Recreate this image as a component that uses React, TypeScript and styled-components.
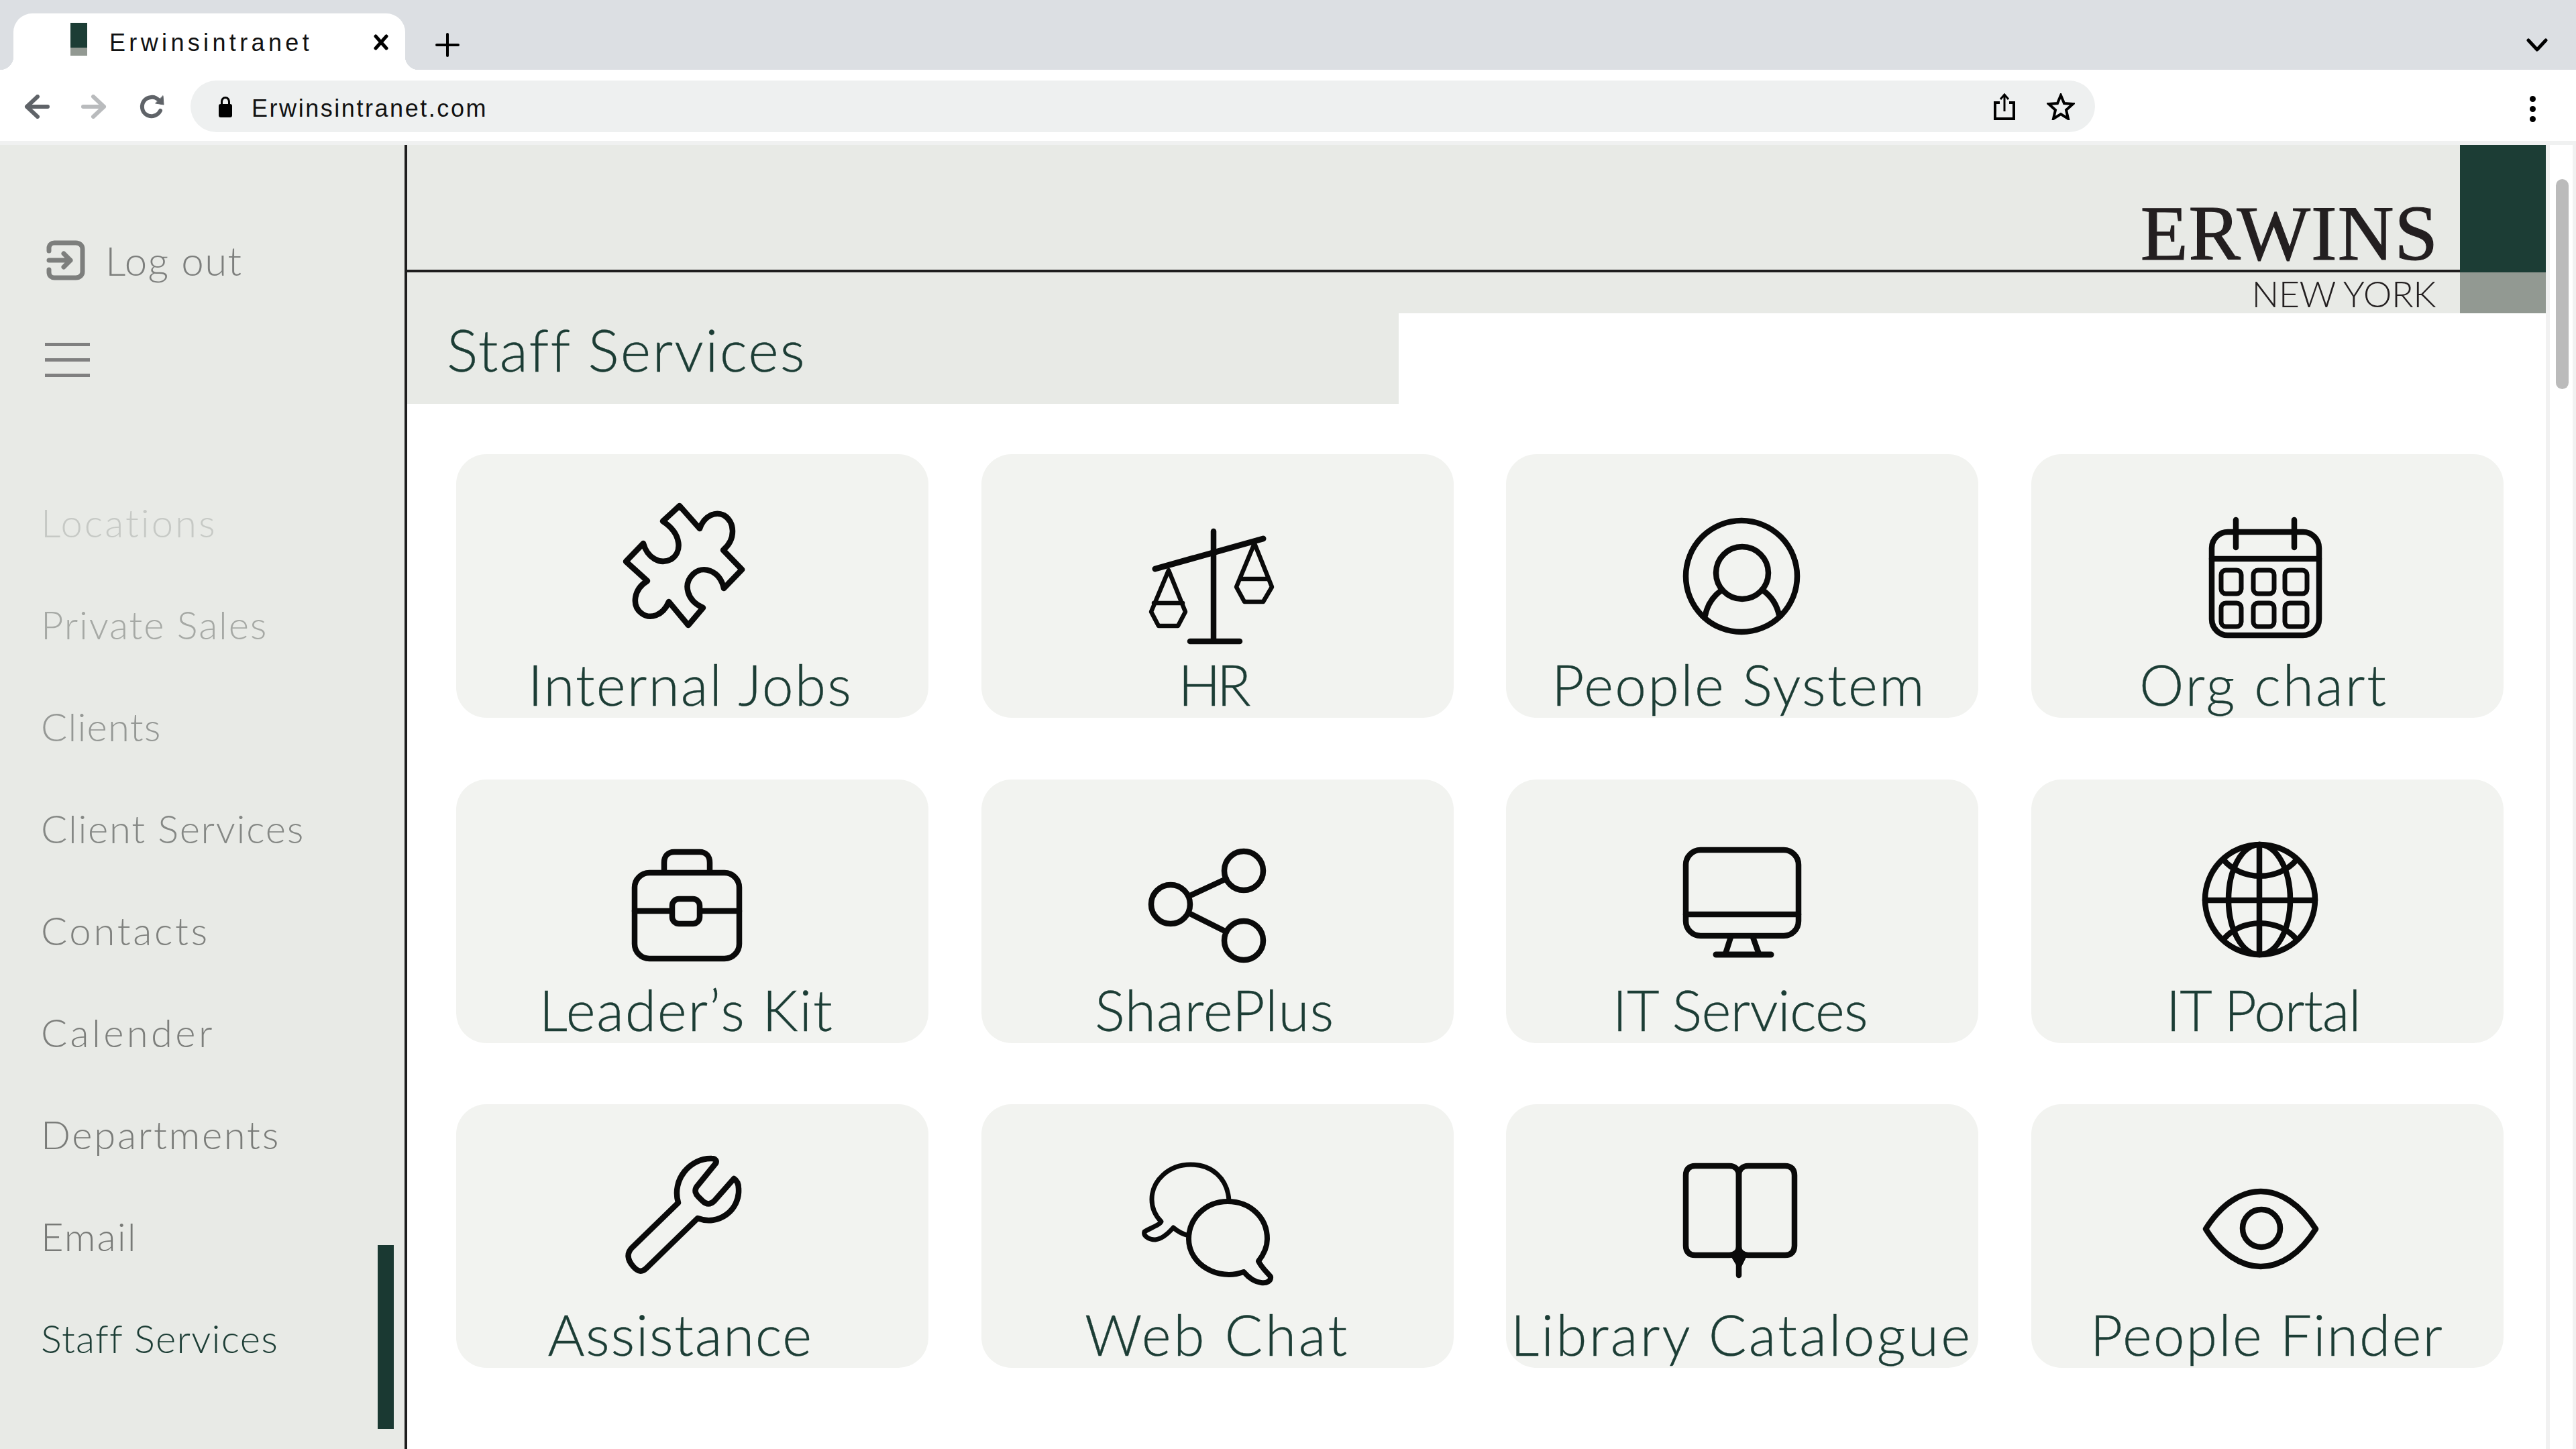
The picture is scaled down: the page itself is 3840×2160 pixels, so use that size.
import React from "react";
import styled, { createGlobalStyle } from "styled-components";

const GREEN = "#1c3d35";
const SOFT = "#e8eae6";
const UI = `"Liberation Sans", Arial, sans-serif`;
const GEO = `Lato, "Noto Sans", sans-serif`;

const Global = createGlobalStyle`
  html, body { margin: 0; padding: 0; background: #fff; }
  * { box-sizing: border-box; }
`;

const Screen = styled.div`
  width: 3840px; height: 2160px; display: flex; flex-direction: column; overflow: hidden; background: #fff;
`;
const TabStrip = styled.div`
  height: 104px; flex: none; background: #dcdfe3; display: flex; align-items: flex-start; padding: 20px 0 0 20px;
`;
const Tab = styled.div`
  position: relative; width: 584px; height: 84px; background: #fff; border-radius: 28px 28px 0 0;
  display: flex; align-items: center; padding: 0 0 0 85px; color: #111;
  &::before, &::after { content: ""; position: absolute; bottom: 0; width: 20px; height: 20px; }
  &::before { left: -20px; background: radial-gradient(circle at 0 0, transparent 20px, #fff 20.5px); }
  &::after { right: -20px; background: radial-gradient(circle at 100% 0, transparent 20px, #fff 20.5px); }
`;
const Favicon = styled.div`
  width: 25px; height: 49px; flex: none; margin: -8px 33px 0 0; background: linear-gradient(${GREEN} 37px, #929992 37px);
`;
const TabTitle = styled.span`
  font: 36px/1 ${UI}; letter-spacing: 5.35px; flex: 1; padding-top: 4px;
`;
const StripIcon = styled.svg`
  flex: none; fill: none; stroke: #000; stroke-linecap: round; stroke-linejoin: round;
`;
const CloseIcon = styled(StripIcon)`
  width: 24px; height: 24px; stroke-width: 5; margin: 2px 24px 0 0;
`;
const PlusIcon = styled(StripIcon)`
  width: 36px; height: 36px; stroke-width: 4; margin: 29px 0 0 45px;
`;
const ChevronIcon = styled(StripIcon)`
  width: 32px; height: 20px; stroke-width: 5; margin: 37px 42px 0 auto;
`;
const Toolbar = styled.div`
  height: 112px; flex: none; background: #fff; border-bottom: 6px solid #f0f1f1; display: flex; align-items: flex-start; padding: 16px 0 0 36px;
`;
const NavIcon = styled.svg<{ $tone: string }>`
  width: 38px; height: 36px; flex: none; margin: 21px 47px 0 0; fill: none; stroke: ${p => p.$tone}; stroke-width: 6; stroke-linecap: round; stroke-linejoin: round;
`;
const ReloadIcon = styled(NavIcon)`
  margin-left: 2px; margin-right: 38px;
`;
const Omnibox = styled.div`
  width: 2839px; height: 77px; flex: none; background: #eef0f0; border-radius: 39px; display: flex; align-items: center; padding: 0 30px 0 41px;
`;
const Lock = styled.svg`
  width: 22px; height: 32px; flex: none; margin-right: 28px; fill: #000;
`;
const Url = styled.span`
  font: 36px/1 ${UI}; letter-spacing: 2.55px; color: #111; flex: 1; padding-top: 7px;
`;
const OmniIcon = styled.svg`
  height: 40px; flex: none; fill: none; stroke: #000; stroke-width: 4;
`;
const ShareIcon = styled(OmniIcon)`
  width: 32px; margin-right: 47px;
`;
const StarIcon = styled(OmniIcon)`
  width: 42px;
`;
const Kebab = styled.div`
  margin: 23px 0 0 auto; width: 10px; margin-right: 59px; display: flex; flex-direction: column; gap: 6px;
  span { width: 9px; height: 9px; border-radius: 50%; background: #000; display: block; }
`;

const Body = styled.div`
  flex: 1; min-height: 0; display: flex;
`;
const Sidebar = styled.aside`
  width: 607px; flex: none; background: ${SOFT}; border-right: 4px solid #1e1e1e; display: flex;
`;
const SideColumn = styled.div`
  flex: 1; min-width: 0; display: flex; flex-direction: column; padding: 142px 0 0 61px;
`;
const LogoutRow = styled.div`
  display: flex; align-items: center; height: 60px; color: #7d7f7d; font: 300 60px/60px ${GEO}; letter-spacing: 1.4px;
`;
const LogoutIcon = styled.svg`
  width: 62px; height: 60px; flex: none; margin: 0 28px 0 6px; fill: none; stroke: #7d7f7d; stroke-width: 7; stroke-linecap: round; stroke-linejoin: round;
`;
const Burger = styled.div`
  width: 67px; margin: 93px 0 0 6px; display: flex; flex-direction: column; gap: 18px;
  span { height: 5px; background: #808080; display: block; }
`;
const NavList = styled.nav`
  margin-top: 141px; display: flex; flex-direction: column;
`;
const NavItem = styled.div<{ $tone: string; $track: number }>`
  height: 152px; display: flex; align-items: center; color: ${p => p.$tone}; font: 300 58px/1 ${GEO}; letter-spacing: ${p => p.$track}px; white-space: nowrap;
`;
const Thumb = styled.div`
  width: 24px; height: 274px; flex: none; align-self: flex-end; margin: 0 16px 30px 0; background: #1a3932;
`;

const Main = styled.main`
  flex: 1; min-width: 0; display: flex; flex-direction: column;
`;
const Header = styled.header`
  height: 251px; flex: none; display: flex; background: ${SOFT};
`;
const BrandColumn = styled.div`
  flex: 1; min-width: 0; display: flex; flex-direction: column; text-align: right;
`;
const BrandTop = styled.div`
  height: 190px; flex: none; border-bottom: 4px solid #1e1e1e; padding: 76px 32px 0 0;
`;
const BrandName = styled.div`
  font: 400 116px/112px "Liberation Serif", serif; color: #231f20; letter-spacing: 1px; -webkit-text-stroke: 1.2px #231f20;
`;
const BrandCity = styled.div`
  padding: 3px 36px 0 0; font: 300 54px/58px ${GEO}; color: #231f20; letter-spacing: -0.5px;
`;
const BrandStripe = styled.div`
  width: 128px; flex: none; display: flex; flex-direction: column; background: #929992;
  &::before { content: ""; height: 190px; background: ${GREEN}; }
`;
const TitleBand = styled.div`
  width: 1478px; height: 135px; flex: none; background: ${SOFT}; display: flex; align-items: flex-start; padding: 4px 0 0 59px;
`;
const Title = styled.h1`
  margin: 0; font: 300 87px/100px ${GEO}; color: ${GREEN}; letter-spacing: 2.2px; -webkit-text-stroke: 0.4px ${GREEN};
`;
const Grid = styled.div`
  margin-top: 75px; padding-left: 73px; display: grid; grid-template-columns: repeat(4, 704px); grid-auto-rows: 393px; column-gap: 78.5px; row-gap: 91.5px;
`;
const Card = styled.a`
  display: flex; flex-direction: column; background: #f2f3f0; border-radius: 45px;
`;
const IconArt = styled.svg`
  width: 704px; height: 298px; flex: none; display: block; fill: none; stroke: #0a0a0a; stroke-width: 8.5; stroke-linecap: round; stroke-linejoin: round;
`;
const CardLabel = styled.span<{ $nudge: number; $track: number }>`
  display: block; text-align: center; white-space: nowrap; padding-right: ${p => p.$nudge}px;
  font: 300 84px/90px ${GEO}; color: ${GREEN}; letter-spacing: ${p => p.$track}px; -webkit-text-stroke: 0.4px ${GREEN};
`;

const Scrollbar = styled.div`
  width: 45px; flex: none; background: #fff; border-left: 6px solid #f1f1f1; border-right: 5px solid #f1f1f1; padding: 51px 5px 0 9px;
`;
const ScrollThumb = styled.div`
  width: 19px; height: 313px; border-radius: 10px; background: #bbb;
`;

const navItems: [string, string, number][] = [
  ["Locations", "#c6c9c5", 3], ["Private Sales", "#a6a9a5", 1.8], ["Clients", "#959895", 1.2], ["Client Services", "#858885", 1.7],
  ["Contacts", "#7f817e", 3.7], ["Calender", "#7d7f7c", 4.35], ["Departments", "#7a7c79", 2.7], ["Email", "#787a77", 2.1], ["Staff Services", GREEN, 1.25],
];

const X = [681, 1463, 2245, 3027];
const Y = [677, 1162, 1646];

type CardDef = { label: string; col: number; row: number; nudge: number; track: number; art: React.ReactNode };

const cards: CardDef[] = [
  { label: "Internal Jobs", col: 0, row: 0, nudge: 6, track: 2.1, art: (
    <path d="M1014 754L1044 788C1051 768 1068 762 1080 768C1097 778 1098 804 1079 820L1107 849L1080 877C1074 850 1048 842 1034 856C1018 872 1026 896 1049 906L1027 932L998 897C989 918 970 924 957 914C942 902 946 878 966 866L934 837L960 810C966 832 985 842 1001 834C1018 824 1018 796 989 777Z" />
  ) },
  { label: "HR", col: 1, row: 0, nudge: 14, track: -6, art: (
    <>
      <path d="M1809 792V954M1774 956H1848" />
      <path d="M1722 848L1883 803" strokeWidth="9" />
      <path d="M1742 850L1716 912L1727 933H1756L1767 912L1742 850ZM1720 899H1763" strokeWidth="6.5" />
      <path d="M1870 810L1843 875L1855 897H1883L1896 875L1870 810ZM1848 863H1891" strokeWidth="6.5" />
    </>
  ) },
  { label: "People System", col: 2, row: 0, nudge: 10, track: 2.3, art: (
    <>
      <circle cx="2596" cy="859" r="83" />
      <circle cx="2597" cy="854" r="39" />
      <path d="M2566 880C2552 890 2545 903 2542 917M2628 880C2642 890 2649 903 2652 917" />
    </>
  ) },
  { label: "Org chart", col: 3, row: 0, nudge: 10, track: 3, art: (
    <>
      <rect x="3296" y="793" width="160" height="154" rx="24" />
      <path d="M3296 833H3456M3332 775V816M3419 775V816" />
      <g strokeWidth="7">
        <rect x="3310" y="850" width="30" height="35" rx="7" /><rect x="3358" y="850" width="31" height="35" rx="7" /><rect x="3405" y="850" width="33" height="35" rx="7" />
        <rect x="3310" y="899" width="30" height="35" rx="7" /><rect x="3358" y="899" width="31" height="35" rx="7" /><rect x="3405" y="899" width="33" height="35" rx="7" />
      </g>
    </>
  ) },
  { label: "Leader’s Kit", col: 0, row: 1, nudge: 18, track: 1.8, art: (
    <>
      <rect x="947" y="1301" width="156" height="128" rx="22" />
      <path d="M991 1299V1286C991 1276 997 1270 1006 1270H1044C1053 1270 1059 1276 1059 1286V1299" />
      <path d="M947 1358H1002M1048 1358H1103" />
      <rect x="1003" y="1340" width="41" height="37" rx="10" />
    </>
  ) },
  { label: "SharePlus", col: 1, row: 1, nudge: 8, track: 0.9, art: (
    <>
      <circle cx="1854" cy="1298" r="29" /><circle cx="1745" cy="1348" r="29" /><circle cx="1854" cy="1402" r="29" />
      <path d="M1772 1336L1828 1310M1772 1361L1828 1389" />
    </>
  ) },
  { label: "IT Services", col: 2, row: 1, nudge: 6, track: -0.7, art: (
    <>
      <rect x="2513" y="1267" width="168" height="128" rx="22" />
      <path d="M2513 1363H2681M2580 1397L2572 1422M2613 1397L2622 1422" />
      <path d="M2558 1423H2640" strokeWidth="9" />
    </>
  ) },
  { label: "IT Portal", col: 3, row: 1, nudge: 12, track: -1.3, art: (
    <>
      <circle cx="3368" cy="1341" r="82" />
      <ellipse cx="3367" cy="1341" rx="46" ry="82" />
      <path d="M3286 1342H3450M3367 1259V1423" />
      <path d="M3313 1281C3340 1314 3396 1314 3423 1281M3313 1401C3340 1368 3396 1368 3423 1401" />
    </>
  ) },
  { label: "Assistance", col: 0, row: 2, nudge: 36, track: 1.6, art: (
    <path d="M1068 1734C1070 1730 1067 1727 1062 1727C1030 1726 1002 1758 1012 1793L943 1860C935 1868 936 1878 945 1888C952 1896 958 1897 965 1890L1041 1816C1072 1828 1104 1804 1102 1772C1102 1766 1100 1760 1095 1757L1066 1790C1060 1796 1054 1796 1048 1790L1042 1784C1036 1778 1036 1772 1042 1766Z" />
  ) },
  { label: "Web Chat", col: 1, row: 2, nudge: 0, track: 3.6, art: (
    <>
      <path d="M1832 1790C1830 1756 1806 1736 1775 1736C1742 1736 1717 1760 1717 1788C1717 1800 1722 1812 1731 1821C1729 1826 1716 1830 1706 1836C1704 1842 1712 1848 1722 1848C1732 1847 1742 1838 1749 1830C1756 1836 1764 1840 1772 1842" strokeWidth="7" />
      <path d="M1854 1896C1816 1910 1772 1885 1772 1847C1772 1815 1798 1791 1830 1791C1864 1791 1889 1815 1889 1847C1889 1860 1883 1871 1876 1880C1881 1890 1888 1896 1894 1903C1895 1910 1888 1913 1880 1912C1869 1911 1860 1903 1854 1896Z" strokeWidth="8" />
    </>
  ) },
  { label: "Library Catalogue", col: 2, row: 2, nudge: 2, track: 3.2, art: (
    <>
      <path d="M2592 1752C2592 1743 2586 1738 2578 1738H2527C2518 1738 2513 1743 2513 1752V1857C2513 1866 2518 1871 2527 1871H2578C2586 1871 2592 1866 2592 1858Z" />
      <path d="M2592 1752C2592 1743 2598 1738 2606 1738H2661C2670 1738 2675 1743 2675 1752V1857C2675 1866 2670 1871 2661 1871H2606C2598 1871 2592 1866 2592 1858Z" />
      <path d="M2592 1870V1901" />
      <path d="M2582 1874H2602L2593 1892Z" fill="#0a0a0a" strokeWidth="2" />
    </>
  ) },
  { label: "People Finder", col: 3, row: 2, nudge: 0, track: 2.1, art: (
    <>
      <path d="M3287 1832C3310 1795 3340 1776 3369 1776C3398 1776 3428 1795 3451 1832C3428 1869 3398 1888 3369 1888C3340 1888 3310 1869 3287 1832Z" />
      <circle cx="3370" cy="1831" r="28" />
    </>
  ) },
];

export default function App() {
  return (
    <Screen>
      <Global />
      <TabStrip>
        <Tab>
          <Favicon />
          <TabTitle>Erwinsintranet</TabTitle>
          <CloseIcon viewBox="0 0 24 24"><path d="M4 3L20 21M20 3L4 21" /></CloseIcon>
        </Tab>
        <PlusIcon viewBox="0 0 36 36"><path d="M18 2V34M2 18H34" /></PlusIcon>
        <ChevronIcon viewBox="0 0 32 20"><path d="M3 3L16 17L29 3" /></ChevronIcon>
      </TabStrip>
      <Toolbar>
        <NavIcon $tone="#5f6368" viewBox="0 0 38 36"><path d="M35 18H4M20 3L4 18L20 33" /></NavIcon>
        <NavIcon $tone="#b9bbbd" viewBox="0 0 38 36"><path d="M3 18H34M18 3L34 18L18 33" /></NavIcon>
        <ReloadIcon $tone="#5f6368" viewBox="0 0 38 36">
          <path d="M31 11C27 5 21 3 17 4C8 5 3 12 4 20C5 28 12 33 20 32C25 31 29 28 31 24" />
          <path d="M24 13L36 15L35 2Z" fill="#5f6368" strokeWidth="1" />
        </ReloadIcon>
        <Omnibox>
          <Lock viewBox="0 0 22 32">
            <path d="M4 12V9C4 4 7 1 11 1C15 1 18 4 18 9V12H15V9C15 6 13.5 4 11 4C8.5 4 7 6 7 9V12Z" />
            <rect x="1" y="12" width="20" height="20" rx="3" />
          </Lock>
          <Url>Erwinsintranet.com</Url>
          <ShareIcon viewBox="0 0 32 40">
            <path d="M9 14H2V38H30V14H23" />
            <path d="M16 27V3M10 9L16 2L22 9" strokeWidth="3" />
          </ShareIcon>
          <StarIcon viewBox="0 0 42 40"><path d="M21 3L26 15L39 16L29 25L32 38L21 31L10 38L13 25L3 16L16 15Z" /></StarIcon>
        </Omnibox>
        <Kebab><span /><span /><span /></Kebab>
      </Toolbar>
      <Body>
        <Sidebar>
          <SideColumn>
            <LogoutRow>
              <LogoutIcon viewBox="0 0 62 60">
                <path d="M6 16V12C6 7 10 4 14 4H46C52 4 56 8 56 13V47C56 52 52 56 46 56H14C10 56 6 53 6 48V44" />
                <path d="M6 30H38M28 20L38 30L28 40" />
              </LogoutIcon>
              Log out
            </LogoutRow>
            <Burger><span /><span /><span /></Burger>
            <NavList>
              {navItems.map(([t, c, k]) => <NavItem key={t} $tone={c} $track={k}>{t}</NavItem>)}
            </NavList>
          </SideColumn>
          <Thumb />
        </Sidebar>
        <Main>
          <Header>
            <BrandColumn>
              <BrandTop><BrandName>ERWINS</BrandName></BrandTop>
              <BrandCity>NEW YORK</BrandCity>
            </BrandColumn>
            <BrandStripe />
          </Header>
          <TitleBand><Title>Staff Services</Title></TitleBand>
          <Grid>
            {cards.map(c => (
              <Card key={c.label}>
                <IconArt viewBox={`${X[c.col]} ${Y[c.row]} 704 298`}>{c.art}</IconArt>
                <CardLabel $nudge={c.nudge} $track={c.track}>{c.label}</CardLabel>
              </Card>
            ))}
          </Grid>
        </Main>
        <Scrollbar><ScrollThumb /></Scrollbar>
      </Body>
    </Screen>
  );
}
